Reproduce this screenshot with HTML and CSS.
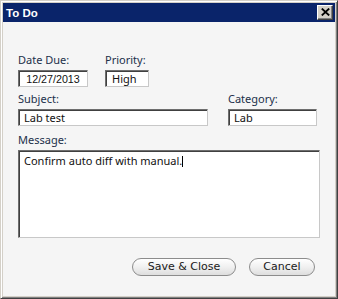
FILE: index.html
```html
<!DOCTYPE html>
<html>
<head>
<meta charset="utf-8">
<link rel="stylesheet" href="styles.css">
</head>
<body>
<div class="window">
  <div class="titlebar">
    <span class="title">To Do</span>
    <div class="close">
      <svg width="9" height="8" viewBox="0 0 9 8"><path d="M0.8 0.6 L8.2 7.4 M8.2 0.6 L0.8 7.4" stroke="#000" stroke-width="1.9" fill="none"/></svg>
    </div>
  </div>
  <div class="content">
    <div class="row r1">
      <div class="field">
        <div class="label">Date Due:</div>
        <div class="input date">12/27/2013</div>
      </div>
      <div class="field">
        <div class="label">Priority:</div>
        <div class="input pri">High</div>
      </div>
    </div>
    <div class="row r2">
      <div class="field">
        <div class="label">Subject:</div>
        <div class="input subj">Lab test</div>
      </div>
      <div class="field">
        <div class="label">Category:</div>
        <div class="input cat">Lab</div>
      </div>
    </div>
    <div class="field r3">
      <div class="label">Message:</div>
      <div class="textarea">Confirm auto diff with manual.<span class="caret"></span></div>
    </div>
    <div class="buttons">
      <div class="btn save">Save &amp; Close</div>
      <div class="btn cancel">Cancel</div>
    </div>
  </div>
</div>
</body>
</html>
```
FILE: styles.css
```css
* { box-sizing: border-box; }
html, body { margin: 0; padding: 0; }
body { width: 338px; height: 299px; background: #d4d0c8; overflow: hidden; }

.window {
  width: 338px;
  height: 299px;
  border: 1px solid;
  border-color: #d4d0c8 #404040 #404040 #d4d0c8;
  box-shadow: inset 1px 1px 0 #ffffff, inset -1px -1px 0 #808080;
  padding: 2px;
  background: #d4d0c8;
  display: flex;
  flex-direction: column;
}

.titlebar {
  height: 19px;
  background: #0a246a;
  display: flex;
  align-items: center;
  justify-content: space-between;
  padding: 0 2px 0 3px;
}
.title {
  font-family: "Liberation Sans", Arial, sans-serif;
  font-weight: bold;
  font-size: 11.5px;
  color: #fff;
}
.close {
  width: 16px;
  height: 15px;
  background: #d4d0c8;
  border: 1px solid;
  border-color: #ffffff #404040 #404040 #ffffff;
  box-shadow: inset -1px -1px 0 #808080;
  display: flex;
  align-items: center;
  justify-content: center;
  padding-bottom: 1px;
}
.close svg { display: block; }

.content {
  flex: 1;
  background: #f5f5f5;
  padding: 31px 0 0 15px;
  display: flex;
  flex-direction: column;
}

.row { display: flex; }
.r1 { gap: 17px; }
.r2 { gap: 20px; margin-top: 5px; }
.r3 { margin-top: 7px; }

.field { display: flex; flex-direction: column; }
.label {
  font-family: "Noto Sans", sans-serif;
  font-size: 11px;
  line-height: 14px;
  color: #22304a;
  margin-bottom: 3px;
}

.input, .textarea {
  background: #fff;
  border: 1px solid;
  border-color: #6e6e6e #c8c8c8 #c8c8c8 #6e6e6e;
  box-shadow: inset 1px 1px 0 #404040;
  font-family: "Noto Sans", sans-serif;
  font-size: 11px;
  color: #111;
}
.input {
  height: 17px;
  line-height: 14px;
  padding: 1px 0 0 5px;
  white-space: nowrap;
}
.input.date {
  width: 70px;
  padding-left: 0;
  text-align: center;
  font-family: "Liberation Sans", Arial, sans-serif;
  font-size: 10.7px;
}
.input.pri { width: 44px; padding-left: 6px; }
.input.subj { width: 190px; }
.input.cat { width: 89px; }

.textarea {
  width: 302px;
  height: 88px;
  line-height: 14px;
  padding: 3px 0 0 5px;
}
.caret {
  display: inline-block;
  width: 1px;
  height: 11px;
  background: #000;
  vertical-align: -2px;
}

.buttons {
  display: flex;
  justify-content: flex-end;
  gap: 13px;
  margin-top: 20px;
  padding-right: 20px;
}
.btn {
  height: 18px;
  border: 1px solid #8c8c8c;
  border-radius: 9px;
  background: linear-gradient(#ffffff, #f0f0f0 50%, #dedede);
  font-family: "DejaVu Sans", sans-serif;
  font-size: 11px;
  line-height: 16px;
  color: #1a1a1a;
  text-align: center;
}
.btn.save { width: 104px; }
.btn.cancel { width: 66px; }
```
